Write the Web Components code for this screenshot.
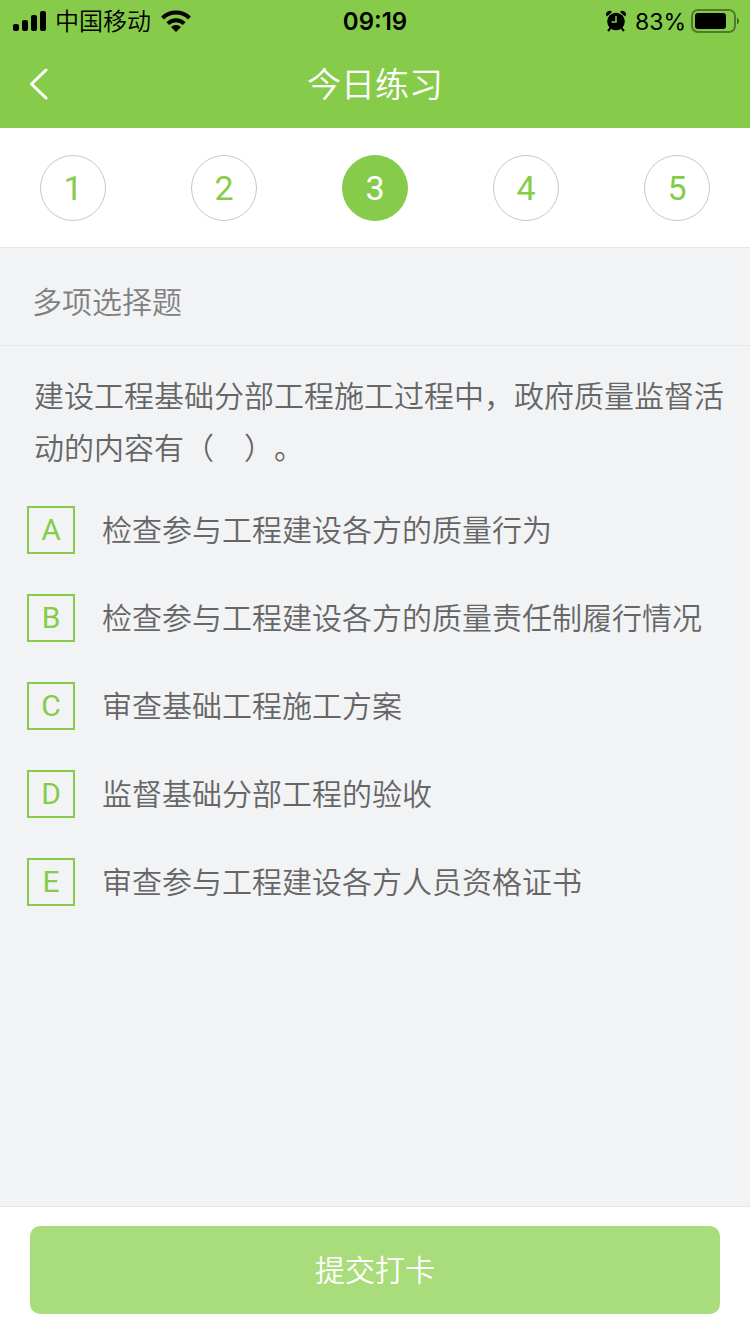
<!DOCTYPE html>
<html lang="zh-CN">
<head>
<meta charset="utf-8">
<meta name="viewport" content="width=device-width, initial-scale=1">
<title>今日练习</title>
<style>
    :root{
        --green:#86cc4a;
        --green-light:#a9dc7a;
        --bg:#f2f3f5;
        --line:#e5e6e8;
        --text:#666;
        --font:Inter, "Noto Sans CJK SC", sans-serif;
        --font-latin:Roboto, sans-serif;
    }
    body{
        margin:0;
        font-family:var(--font);
        font-weight:350;
        text-spacing-trim:space-all;
        background-color:var(--bg);
    }
</style>
</head>
<body>
<practice-page>
    <status-bar slot="top" carrier="中国移动" time="09:19" battery="83"></status-bar>
    <nav-bar slot="top">今日练习</nav-bar>
    <step-list slot="top" total="5" current="3"></step-list>
    <question-type>多项选择题</question-type>
    <question-text>建设工程基础分部工程施工过程中，政府质量监督活动的内容有（　）。</question-text>
    <option-item letter="A">检查参与工程建设各方的质量行为</option-item>
    <option-item letter="B">检查参与工程建设各方的质量责任制履行情况</option-item>
    <option-item letter="C">审查基础工程施工方案</option-item>
    <option-item letter="D">监督基础分部工程的验收</option-item>
    <option-item letter="E">审查参与工程建设各方人员资格证书</option-item>
    <submit-bar slot="bottom">提交打卡</submit-bar>
</practice-page>

<script>
class PracticePage extends HTMLElement {
    constructor() {
        super();
        this.attachShadow({ mode: 'open' });
    }
    connectedCallback() {
        this.shadowRoot.innerHTML = /*html*/ `
        <style>
            :host{
                display:flex;
                flex-direction:column;
                min-height:100vh;
            }
            main{
                flex:1;
            }
        </style>
        <header><slot name="top"></slot></header>
        <main><slot></slot></main>
        <footer><slot name="bottom"></slot></footer>
        `;
    }
}
customElements.define("practice-page", PracticePage);

class StatusBar extends HTMLElement {
    constructor() {
        super();
        this.attachShadow({ mode: 'open' });
    }
    connectedCallback() {
        this.render();
    }
    render() {
        this.shadowRoot.innerHTML = /*html*/ `
        <style>
            :host{
                display:grid;
                grid-template-columns:1fr auto 1fr;
                align-items:center;
                height:40px;
                padding:0 12px;
                background-color:var(--green);
                color:#000;
                font-size:24px;
                line-height:40px;
            }
            .left, .right{
                display:flex;
                align-items:center;
            }
            .left{
                gap:9px;
            }
            .right{
                justify-content:flex-end;
                gap:5px;
                margin-right:-1px;
            }
            .carrier, .time, .battery{
                padding-top:2px;
            }
            .time{
                font-weight:600;
            }
            .battery{
                font-size:23px;
                font-weight:400;
            }
            .alarm{
                margin-right:4px;
            }
            svg{
                display:block;
            }
        </style>
        <div class="left">
            <svg width="34" height="22" viewBox="0 0 34 22">
                <rect x="1" y="14" width="6" height="7" rx="2"/>
                <rect x="10" y="10" width="6" height="11" rx="2"/>
                <rect x="19" y="5" width="6" height="16" rx="2"/>
                <rect x="28" y="1" width="6" height="20" rx="2"/>
            </svg>
            <span class="carrier">${this.getAttribute('carrier')}</span>
            <svg width="32" height="24" viewBox="0 0 32 24">
                <g fill="none" stroke="#000" stroke-width="4">
                    <path d="M2.500 9a19.500 19.500 0 0 1 27 0"/>
                    <path d="M7.800 14.600a11.600 11.600 0 0 1 16.400 0"/>
                </g>
                <path d="M16 23l-5-5a7.200 7.200 0 0 1 10 0z"/>
            </svg>
        </div>
        <span class="time">${this.getAttribute('time')}</span>
        <div class="right">
            <svg class="alarm" width="20" height="22" viewBox="0 0 20 22">
                <circle cx="10" cy="11.500" r="8.800"/>
                <path d="M1 6.500a3.200 3.200 0 0 1 5-4.500zM19 6.500a3.200 3.200 0 0 0-5-4.500z"/>
                <path d="M4.500 18L2 21M15.500 18L18 21" stroke="#000" stroke-width="2"/>
                <path d="M10 6v6H5.500" fill="none" stroke="#86cc4a" stroke-width="1.500"/>
            </svg>
            <span class="battery">${this.getAttribute('battery')}%</span>
            <svg width="48" height="24" viewBox="0 0 48 24">
                <rect x="1" y="1" width="43" height="22" rx="6" fill="none" stroke="#000" stroke-opacity=".4" stroke-width="2"/>
                <rect x="4" y="4" width="31" height="16" rx="3"/>
                <path d="M46 8.500q2 1 2 3.500t-2 3.500z" fill-opacity=".5"/>
            </svg>
        </div>
        `;
    }
}
customElements.define("status-bar", StatusBar);

class NavBar extends HTMLElement {
    constructor() {
        super();
        this.attachShadow({ mode: 'open' });
    }
    connectedCallback() {
        this.shadowRoot.innerHTML = /*html*/ `
        <style>
            :host{
                display:grid;
                grid-template-columns:80px 1fr 80px;
                align-items:center;
                height:88px;
                background-color:var(--green);
                color:#fff;
            }
            button{
                height:88px;
                padding:0 0 0 28px;
                border:0;
                background:none;
                color:inherit;
            }
            svg{
                display:block;
            }
            h1{
                margin:0;
                padding-top:2px;
                font-size:34px;
                font-weight:inherit;
                line-height:48px;
                text-align:center;
            }
        </style>
        <button type="button" aria-label="返回">
            <svg width="22" height="32" viewBox="0 0 22 32" fill="none" stroke="currentColor" stroke-width="3" stroke-linecap="round" stroke-linejoin="round">
                <path d="M18 2L3.500 16L18 30"/>
            </svg>
        </button>
        <h1><slot></slot></h1>
        `;
    }
}
customElements.define("nav-bar", NavBar);

class StepList extends HTMLElement {
    constructor() {
        super();
        this.attachShadow({ mode: 'open' });
    }
    connectedCallback() {
        this.render();
    }
    render() {
        const total = Number(this.getAttribute('total'));
        const current = Number(this.getAttribute('current'));
        let steps = '';
        for (let i = 1; i <= total; i++) {
            steps += `<button type="button" ${i === current ? 'class="active" aria-current="step"' : ''}>${i}</button>`;
        }
        this.shadowRoot.innerHTML = /*html*/ `
        <style>
            :host{
                display:flex;
                justify-content:space-between;
                padding:27px 40px 26px;
                border-bottom:1px solid var(--line);
                background-color:#fff;
            }
            button{
                width:66px;
                height:66px;
                padding:0;
                border:1px solid #c8c8c8;
                border-radius:50%;
                background:#fff;
                color:var(--green);
                font-family:var(--font-latin);
                font-size:34px;
                font-weight:400;
                line-height:64px;
            }
            .active{
                border-color:var(--green);
                background-color:var(--green);
                color:#fff;
            }
        </style>
        ${steps}
        `;
    }
}
customElements.define("step-list", StepList);

class QuestionType extends HTMLElement {
    constructor() {
        super();
        this.attachShadow({ mode: 'open' });
    }
    connectedCallback() {
        this.shadowRoot.innerHTML = /*html*/ `
        <style>
            :host{
                display:block;
                padding:28px 32px 17px;
                border-bottom:1px solid var(--line);
                color:#808080;
            }
            h2{
                margin:0;
                font-size:30px;
                font-weight:inherit;
                line-height:52px;
            }
        </style>
        <h2><slot></slot></h2>
        `;
    }
}
customElements.define("question-type", QuestionType);

class QuestionText extends HTMLElement {
    constructor() {
        super();
        this.attachShadow({ mode: 'open' });
    }
    connectedCallback() {
        this.shadowRoot.innerHTML = /*html*/ `
        <style>
            :host{
                display:block;
                padding:24px 20px 12px 34px;
                color:var(--text);
            }
            p{
                margin:0;
                font-size:30px;
                line-height:52px;
            }
        </style>
        <p><slot></slot></p>
        `;
    }
}
customElements.define("question-text", QuestionText);

class OptionItem extends HTMLElement {
    constructor() {
        super();
        this.attachShadow({ mode: 'open' });
    }
    connectedCallback() {
        this.render();
    }
    render() {
        this.shadowRoot.innerHTML = /*html*/ `
        <style>
            :host{
                display:block;
                color:var(--text);
            }
            label{
                display:flex;
                align-items:center;
                gap:27px;
                padding:20px 27px;
                font-size:30px;
                line-height:48px;
            }
            .box{
                display:grid;
                flex:none;
            }
            /* la letra y el checkbox comparten celda */
            .box > *{
                grid-area:1 / 1;
            }
            input{
                appearance:none;
                box-sizing:border-box;
                width:48px;
                height:48px;
                margin:0;
                border:2px solid var(--green);
            }
            input:checked{
                background-color:var(--green);
            }
            .letter{
                z-index:1;
                color:var(--green);
                font-family:var(--font-latin);
                font-weight:400;
                text-align:center;
            }
            input:checked + .letter{
                color:#fff;
            }
        </style>
        <label>
            <span class="box">
                <input type="checkbox" name="answer" value="${this.getAttribute('letter')}">
                <span class="letter">${this.getAttribute('letter')}</span>
            </span>
            <span><slot></slot></span>
        </label>
        `;
    }
}
customElements.define("option-item", OptionItem);

class SubmitBar extends HTMLElement {
    constructor() {
        super();
        this.attachShadow({ mode: 'open' });
    }
    connectedCallback() {
        this.shadowRoot.innerHTML = /*html*/ `
        <style>
            :host{
                display:block;
                padding:19px 30px 20px;
                border-top:1px solid var(--line);
                background-color:#fff;
            }
            button{
                display:block;
                width:100%;
                height:88px;
                padding:0;
                border:0;
                border-radius:10px;
                background-color:var(--green-light);
                color:#fff;
                font-family:inherit;
                font-size:30px;
                font-weight:inherit;
                line-height:88px;
            }
        </style>
        <button type="button"><slot></slot></button>
        `;
    }
}
customElements.define("submit-bar", SubmitBar);
</script>
</body>
</html>
